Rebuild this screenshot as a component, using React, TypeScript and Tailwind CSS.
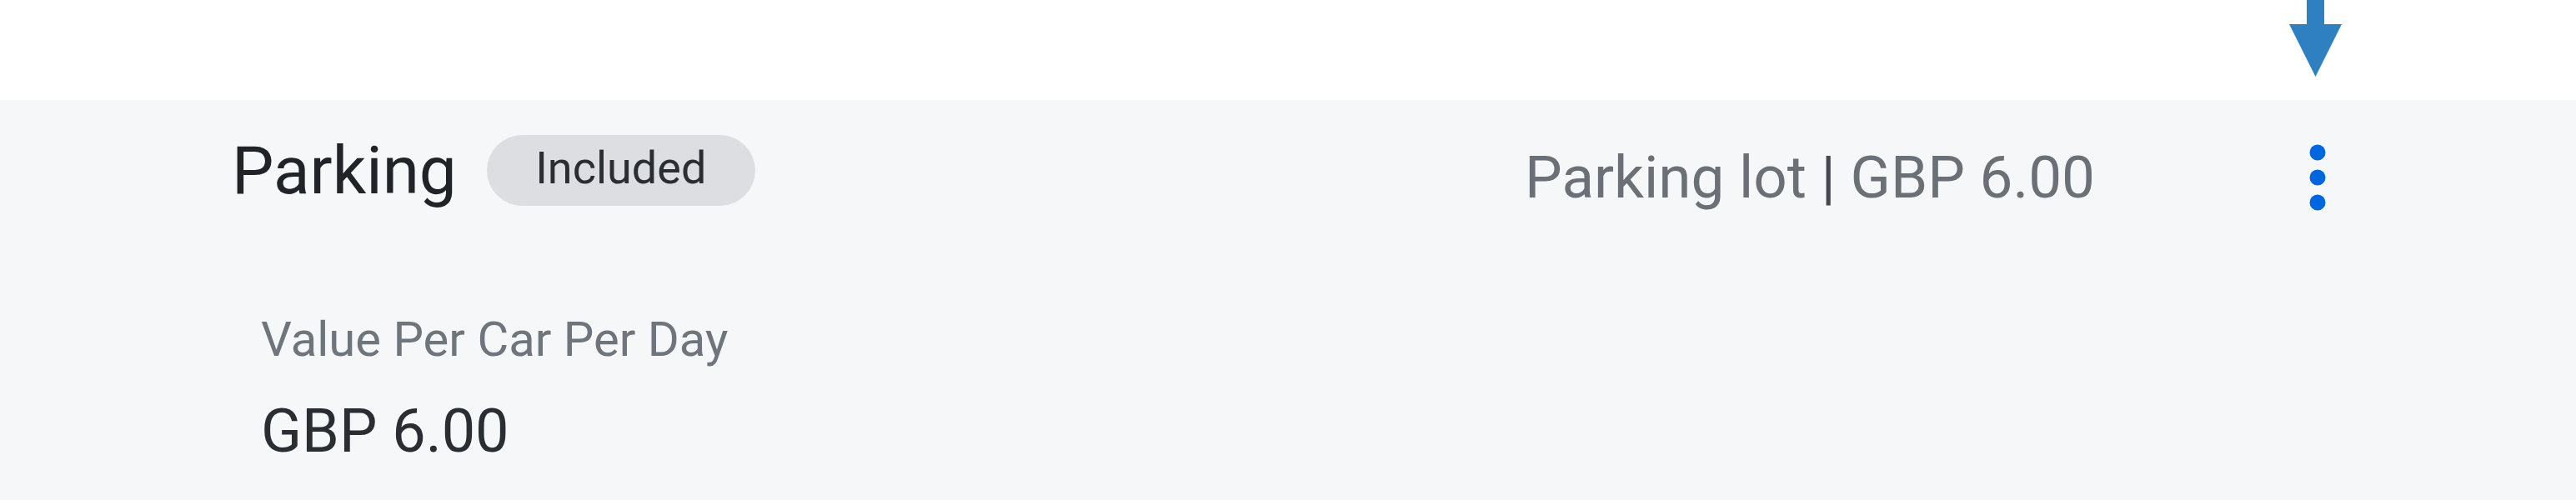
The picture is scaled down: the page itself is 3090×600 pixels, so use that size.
import React from 'react';

const font = { fontFamily: 'Roboto, "Liberation Sans", sans-serif' };

// Material "more_vert" glyph, drawn at 120px
const MoreVert: React.FC = () => (
    <svg viewBox="0 0 24 24" className="w-[120px] h-[120px] shrink-0" fill="#0066e0">
        <circle cx="12" cy="6" r="1.9" />
        <circle cx="12" cy="12" r="1.9" />
        <circle cx="12" cy="18" r="1.9" />
    </svg>
);

// Annotation arrow pointing at the menu button
const PointerArrow: React.FC = () => (
    <svg className="absolute left-[2746px] top-0 w-[63px] h-[92px]" viewBox="0 0 63 92" fill="#2f80c1">
        <rect x="21" y="0" width="21" height="31" />
        <polygon points="0,29 63,29 31.5,92" />
    </svg>
);

export default function App() {
    return (
        <div className="relative w-[3090px] h-[600px] bg-white overflow-hidden" style={font}>
            <PointerArrow />
            <div className="h-[120px]" />
            <div className="h-[480px] bg-[#f6f7f9] pl-[278px] pr-[250px] pt-[33px]">
                <div className="flex items-start">
                    <div className="flex items-center h-[85px] mt-[9px]">
                        <h2 className="text-[80px] leading-[80px] text-[#202328]">Parking</h2>
                        <span className="ml-[36px] w-[322px] h-[85px] rounded-full bg-[#dcdee1] flex items-center justify-center pb-[6px] text-[54px] leading-[54px] text-[#2a2e34]">
                            Included
                        </span>
                    </div>
                    <div className="ml-auto flex items-start gap-[207px]">
                        <div className="mt-[24px] text-[71px] leading-[71px] text-[#6b7076] whitespace-nowrap">
                            Parking lot <span className="text-[#45494f]">|</span> GBP 6.00
                        </div>
                        <MoreVert />
                    </div>
                </div>
                <div className="ml-[35px] mt-[105px] flex flex-col gap-[46px]">
                    <div className="text-[58px] leading-[58px] text-[#6f757c]">Value Per Car Per Day</div>
                    <div className="text-[72px] leading-[72px] text-[#2a2e33]">GBP 6.00</div>
                </div>
            </div>
        </div>
    );
}
